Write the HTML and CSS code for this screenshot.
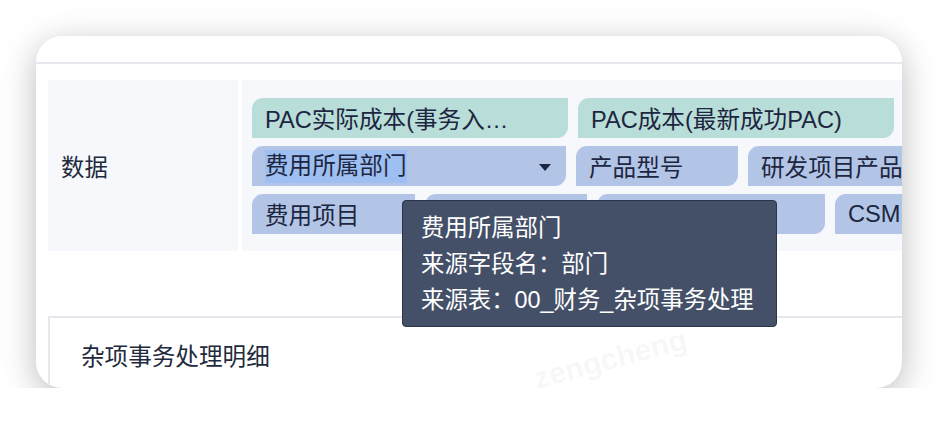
FILE: index.html
```html
<!DOCTYPE html>
<html lang="zh-CN">
<head>
<meta charset="utf-8">
<title>数据</title>
<link rel="stylesheet" href="styles.css">
</head>
<body>
<div class="stage">
  <div class="card">
    <div class="card-head"></div>
    <div class="panel">
      <div class="label-cell">数据</div>
      <div class="tags-cell">
        <div class="row">
          <div class="tag tag-green w-316">PAC实际成本(事务入…</div>
          <div class="tag tag-green w-316">PAC成本(最新成功PAC)</div>
        </div>
        <div class="row">
          <div class="tag tag-blue tag-select w-314">
            <span class="sel">费用所属部门</span>
            <svg class="caret" width="12" height="7" viewBox="0 0 12 7"><path d="M0 0H12L6 7Z" fill="#1d2640"/></svg>
          </div>
          <div class="tag tag-blue w-162">产品型号</div>
          <div class="tag tag-blue w-230">研发项目产品</div>
        </div>
        <div class="row">
          <div class="tag tag-blue w-163">费用项目</div>
          <div class="tag tag-blue w-162"></div>
          <div class="tag tag-blue w-228"></div>
          <div class="tag tag-blue w-200">CSM</div>
        </div>
      </div>
    </div>
    <div class="detail">杂项事务处理明细</div>
    <div class="tooltip">
      <div>费用所属部门</div>
      <div>来源字段名：部门</div>
      <div>来源表：00_财务_杂项事务处理</div>
    </div>
    <div class="watermark">zengcheng</div>
  </div>
</div>
</body>
</html>
```
FILE: styles.css
```css
html, body {
  margin: 0;
  padding: 0;
  background: #ffffff;
}
body {
  font-family: "Liberation Sans", "Noto Sans CJK SC", sans-serif;
  color: #1d2640;
}
.stage {
  padding: 36px 0 0 36px;
}
.card {
  position: relative;
  width: 866px;
  height: 352px;
  background: #ffffff;
  border-radius: 26px;
  overflow: hidden;
  box-shadow: 0 8px 34px rgba(0, 0, 0, 0.27);
  display: flex;
  flex-direction: column;
}
.card-head {
  height: 26px;
  flex: none;
  border-bottom: 2px solid #e7e7ef;
}
.panel {
  flex: none;
  display: flex;
  gap: 4px;
  width: 1200px;
  height: 171px;
  margin: 16px 0 0 12px;
  background: #ffffff;
}
.label-cell {
  width: 177px;
  padding-left: 13px;
  background: #f7f8fc;
  display: flex;
  align-items: center;
  font-size: 23.4px;
  color: #222b3d;
}
.tags-cell {
  flex: 1;
  background: #f7f8fc;
  padding: 18px 0 0 10px;
  display: flex;
  flex-direction: column;
  gap: 8px;
}
.row {
  display: flex;
  gap: 10px;
}
.tag {
  flex: none;
  box-sizing: border-box;
  height: 40px;
  padding: 0 15px 0 13px;
  border-radius: 11px 0 11px 0;
  display: flex;
  align-items: center;
  font-size: 23.6px;
  white-space: nowrap;
  overflow: hidden;
  color: #1d2640;
}
.tag-green { background: #b9ddd8; }
.tag-blue { background: #b2c5e6; }
.tag-select { justify-content: space-between; }
.sel {
  display: inline-block;
  line-height: 33px;
  background: #9ebff1;
}
.caret { flex: none; margin-top: 2px; }
.w-316 { width: 316px; }
.w-314 { width: 314px; }
.w-230 { width: 230px; }
.w-228 { width: 228px; }
.w-200 { width: 200px; }
.w-163 { width: 163px; }
.w-162 { width: 162px; }
.detail {
  flex: 1;
  margin: 65px 0 0 12px;
  border-top: 2px solid #e6e7ef;
  border-left: 2px solid #e6e7ef;
  padding: 23px 0 0 31px;
  font-size: 23.6px;
  line-height: 32px;
  color: #222b3d;
}
.tooltip {
  position: absolute;
  left: 366px;
  top: 164px;
  width: 375px;
  height: 127px;
  box-sizing: border-box;
  padding: 9px 0 0 18px;
  background: #435068;
  border: 1px solid #2c3547;
  border-radius: 4px;
  color: #ffffff;
  font-size: 23.4px;
  line-height: 36px;
  white-space: nowrap;
}
.watermark {
  position: absolute;
  left: 496px;
  top: 306px;
  font-family: "Liberation Sans", sans-serif;
  font-weight: bold;
  font-size: 30px;
  color: rgba(0, 0, 0, 0.05);
  transform: rotate(-15deg);
  pointer-events: none;
}
```
